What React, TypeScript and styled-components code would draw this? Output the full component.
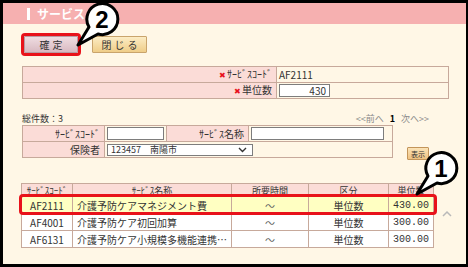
import styled, { createGlobalStyle } from "styled-components";

const GlobalStyle = createGlobalStyle`
  html, body {
    margin: 0;
    padding: 0;
    background: #fff;
  }
  body {
    font-family: "Noto Sans CJK JP", "Liberation Sans", sans-serif;
  }
  * {
    box-sizing: border-box;
  }
`;

type Row = {
  code: string;
  name: string;
  time: string;
  kubun: string;
  unit: string;
  selected?: boolean;
};

const rows: Row[] = [
  { code: "AF2111", name: "介護予防ケアマネジメント費", time: "～", kubun: "単位数", unit: "430.00", selected: true },
  { code: "AF4001", name: "介護予防ケア初回加算", time: "～", kubun: "単位数", unit: "300.00" },
  { code: "AF6131", name: "介護予防ケア小規模多機能連携…", time: "～", kubun: "単位数", unit: "300.00" },
];

function Callout({ num, left, top }: { num: string; left: number; top: number }) {
  return (
    <CalloutSvg width="50" height="48" viewBox="0 0 50 48" style={{ left, top }}>
      <path
        d="M24,34 A15.5,15.5 0 1 0 15,27 L4,45 Z"
        fill="#fff"
        stroke="#000"
        strokeWidth="3"
        strokeLinejoin="round"
      />
      <text
        x="28"
        y="28"
        textAnchor="middle"
        fontSize="24"
        fontWeight="bold"
        fontFamily="Liberation Sans, sans-serif"
      >
        {num}
      </text>
    </CalloutSvg>
  );
}

export default function App() {
  return (
    <>
      <GlobalStyle />
      <Frame>
        <TitleBar>
          <TitleMark />
          サービス
        </TitleBar>
        <Body>
          <ButtonRow>
            <Button $variant="confirm">確定</Button>
            <Button $variant="close">閉じる</Button>
          </ButtonRow>

          <InfoTable>
            <tbody>
              <tr>
                <LabelCell $width={254}>
                  <Required>✖</Required>ｻｰﾋﾞｽｺｰﾄﾞ
                </LabelCell>
                <ValueCell>AF2111</ValueCell>
              </tr>
              <tr>
                <LabelCell $width={254}>
                  <Required>✖</Required>単位数
                </LabelCell>
                <ValueCell>
                  <TextInput $width={51} $align="right" defaultValue="430" />
                </ValueCell>
              </tr>
            </tbody>
          </InfoTable>

          <SummaryRow>
            <span>総件数：3</span>
            <Pager>
              &lt;&lt;前へ <b>1</b> 次へ&gt;&gt;
            </Pager>
          </SummaryRow>

          <SearchRow>
            <SearchTable>
              <tbody>
                <tr>
                  <LabelCell $width={82}>ｻｰﾋﾞｽｺｰﾄﾞ</LabelCell>
                  <ValueCell $width={61}>
                    <TextInput $width={57} />
                  </ValueCell>
                  <LabelCell $width={82}>ｻｰﾋﾞｽ名称</LabelCell>
                  <ValueCell>
                    <TextInput $width={133} />
                  </ValueCell>
                </tr>
                <tr>
                  <LabelCell>保険者</LabelCell>
                  <ValueCell colSpan={3}>
                    <SelectBox>
                      <span>123457　南陽市</span>
                      <svg width="9" height="6" viewBox="0 0 9 6">
                        <polyline points="1,1 4.5,4.5 8,1" fill="none" stroke="#333" strokeWidth="1.4" />
                      </svg>
                    </SelectBox>
                  </ValueCell>
                </tr>
              </tbody>
            </SearchTable>
            <ShowButton>表示</ShowButton>
          </SearchRow>

          <ResultsWrap>
            <ResultsTable>
              <thead>
                <tr>
                  <HeadCell $width={51}>ｻｰﾋﾞｽｺｰﾄﾞ</HeadCell>
                  <HeadCell $width={155}>ｻｰﾋﾞｽ名称</HeadCell>
                  <HeadCell $width={77}>所要時間</HeadCell>
                  <HeadCell $width={80}>区分</HeadCell>
                  <HeadCell>単位数</HeadCell>
                </tr>
              </thead>
              <tbody>
                {rows.map((r) => (
                  <tr key={r.code}>
                    <Cell $selected={r.selected} $align="center">{r.code}</Cell>
                    <Cell $selected={r.selected}>{r.name}</Cell>
                    <Cell $selected={r.selected} $align="center" $muted>{r.time}</Cell>
                    <Cell $selected={r.selected} $align="center">{r.kubun}</Cell>
                    <Cell $selected={r.selected} $align="right" $mono>{r.unit}</Cell>
                  </tr>
                ))}
              </tbody>
            </ResultsTable>
            <RowMark />
            <ScrollArrow width="10" height="7" viewBox="0 0 10 7">
              <polyline points="1,6 5,2 9,6" fill="none" stroke="#b9b9b9" strokeWidth="1.5" />
            </ScrollArrow>
          </ResultsWrap>
        </Body>

        <Callout num="2" left={71} top={-3} />
        <Callout num="1" left={410} top={146} />
      </Frame>
    </>
  );
}

const Frame = styled.div`
  position: relative;
  width: 468px;
  height: 267px;
  border: 3px solid #000;
  border-right-width: 2px;
  background: #fff7e6;
  overflow: hidden;
`;

const TitleBar = styled.div`
  display: flex;
  align-items: center;
  gap: 7px;
  height: 21px;
  padding-left: 24px;
  background: #f6b0b0;
  color: #fff;
  font-size: 12px;
  font-weight: bold;
`;

const TitleMark = styled.span`
  width: 3px;
  height: 12px;
  background: #fff;
`;

const Body = styled.div`
  padding-left: 19px;
`;

const ButtonRow = styled.div`
  display: flex;
  gap: 14px;
  margin-top: 12px;
  padding-left: 2px;
`;

const Button = styled.button<{ $variant: "confirm" | "close" }>`
  width: ${(p) => (p.$variant === "confirm" ? 54 : 55)}px;
  height: 17px;
  padding: 0;
  font-family: inherit;
  font-size: 10px;
  letter-spacing: 3px;
  text-indent: 3px;
  color: #333;
  border: 1px solid ${(p) => (p.$variant === "confirm" ? "#b79ca4" : "#c9a46c")};
  border-radius: 1px;
  background: ${(p) =>
    p.$variant === "confirm"
      ? "linear-gradient(#efdde1, #d8b9c1)"
      : "linear-gradient(#fcecc4, #efcd88)"};
  outline: ${(p) => (p.$variant === "confirm" ? "3px solid #e8121a" : "none")};
  outline-offset: 0;
`;

const InfoTable = styled.table`
  margin-top: 13px;
  width: 427px;
  border-collapse: collapse;
  font-size: 10px;
  color: #333;
`;

const LabelCell = styled.td<{ $width?: number }>`
  width: ${(p) => (p.$width ? `${p.$width}px` : "auto")};
  height: 16px;
  padding: 0 4px;
  text-align: right;
  background: #fbdcd7;
  border: 1px solid #c7a99b;
  line-height: 14px;
  white-space: nowrap;
`;

const ValueCell = styled.td<{ $width?: number }>`
  width: ${(p) => (p.$width ? `${p.$width}px` : "auto")};
  height: 16px;
  padding: 0 2px;
  background: #fff7e6;
  border: 1px solid #c7a99b;
  line-height: 14px;
`;

const Required = styled.span`
  color: #e8121a;
  font-size: 8px;
  margin-right: 1px;
`;

const TextInput = styled.input<{ $width: number; $align?: "left" | "right" }>`
  display: block;
  width: ${(p) => p.$width}px;
  height: 13px;
  padding: 0 3px;
  border: 1px solid #7d7d7d;
  background: #fff;
  font-family: inherit;
  font-size: 10px;
  color: #333;
  text-align: ${(p) => p.$align || "left"};
`;

const SummaryRow = styled.div`
  display: flex;
  justify-content: space-between;
  width: 407px;
  margin-top: 14px;
  height: 12px;
  line-height: 12px;
  font-size: 9px;
  color: #333;
`;

const Pager = styled.span`
  color: #8a8a8a;

  b {
    color: #000;
    margin: 0 4px;
  }
`;

const SearchRow = styled.div`
  display: flex;
  align-items: flex-start;
`;

const SearchTable = styled.table`
  width: 371px;
  border-collapse: collapse;
  font-size: 10px;
  color: #333;
`;

const SelectBox = styled.div`
  display: flex;
  align-items: center;
  justify-content: space-between;
  width: 146px;
  height: 12px;
  padding: 0 5px 0 3px;
  border: 1px solid #7d7d7d;
  background: #fff;
  font-size: 9px;
  color: #333;
`;

const ShowButton = styled.button`
  margin: 22px 0 0 14px;
  width: 22px;
  height: 13px;
  padding: 0;
  font-family: inherit;
  font-size: 7px;
  color: #333;
  border: 1px solid #c3955a;
  border-radius: 1px;
  background: linear-gradient(#fbe3b6, #efc282);
`;

const ResultsWrap = styled.div`
  position: relative;
  margin: 23px 0 0 -1px;
`;

const ResultsTable = styled.table`
  width: 413px;
  border-collapse: collapse;
  font-size: 10px;
  color: #333;
`;

const HeadCell = styled.th<{ $width?: number }>`
  width: ${(p) => (p.$width ? `${p.$width}px` : "auto")};
  height: 13px;
  padding: 0;
  font-size: 9px;
  font-weight: normal;
  line-height: 11px;
  background: #fbdcd7;
  border: 1px solid #c7a99b;
  white-space: nowrap;
`;

const Cell = styled.td<{
  $selected?: boolean;
  $align?: "left" | "center" | "right";
  $muted?: boolean;
  $mono?: boolean;
}>`
  height: 17px;
  padding: 0 4px;
  line-height: 15px;
  text-align: ${(p) => p.$align || "left"};
  font-family: ${(p) => (p.$mono ? '"Liberation Mono", monospace' : "inherit")};
  color: ${(p) => (p.$muted ? "#666" : "#333")};
  background: ${(p) => (p.$selected ? "#ffffc2" : "#fff")};
  border: 1px solid #c7a99b;
  white-space: nowrap;
`;

const RowMark = styled.div`
  position: absolute;
  left: -2px;
  top: 11px;
  width: 418px;
  height: 21px;
  border: 3px solid #e8121a;
  border-radius: 4px;
`;

const ScrollArrow = styled.svg`
  position: absolute;
  left: 421px;
  top: 27px;
`;

const CalloutSvg = styled.svg`
  position: absolute;
  overflow: visible;
`;
